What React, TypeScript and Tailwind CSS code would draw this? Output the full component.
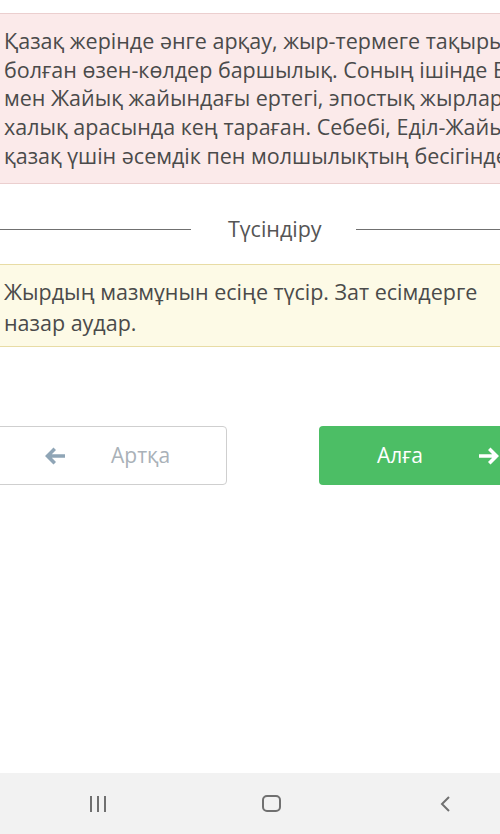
import React from "react";

const lines = [
  "Қазақ жерінде әнге арқау, жыр-термеге тақырып",
  "болған өзен-көлдер баршылық. Соның ішінде Еділ",
  "мен Жайық жайындағы ертегі, эпостық жырлар",
  "халық арасында кең тараған. Себебі, Еділ-Жайық",
  "қазақ үшін әсемдік пен молшылықтың бесігіндей",
];

const ArrowLeft = ({ className }: { className?: string }) => (
  <svg viewBox="0 0 24 20" className={className} fill="currentColor">
    <path d="M10.5 1.5 L2 10 L10.5 18.5 L13 16 L8.8 11.8 H22 V8.2 H8.8 L13 4 Z" />
  </svg>
);

const ArrowRight = ({ className }: { className?: string }) => (
  <svg viewBox="0 0 24 20" className={className} fill="currentColor">
    <path d="M13.5 1.5 L22 10 L13.5 18.5 L11 16 L15.2 11.8 H2 V8.2 H15.2 L11 4 Z" />
  </svg>
);

export default function App() {
  return (
    <div
      className="w-[500px] h-[834px] overflow-hidden bg-white flex flex-col text-[#4a4a4a]"
      style={{ fontFamily: '"Open Sans", "Noto Sans", sans-serif' }}
    >
      <div className="mt-[13px] -ml-[10px] w-[560px] h-[171px] shrink-0 bg-[#fbeaea] border border-[#ebcfcf] pl-[13px] pt-[13px] overflow-hidden">
        {lines.map((l, i) => (
          <div key={i} className="whitespace-nowrap text-[21.5px] leading-[28.7px]">
            {l}
          </div>
        ))}
      </div>

      <div className="flex items-center mt-[30px] h-[30px] shrink-0">
        <div className="w-[191px] shrink-0 h-px bg-[#707070]" />
        <span className="ml-[37px] text-[21.5px] leading-[30px] text-[#555]">Түсіндіру</span>
        <div className="ml-[34px] flex-1 h-px bg-[#707070]" />
      </div>

      <div className="mt-[20px] -ml-[10px] w-[540px] h-[83px] shrink-0 bg-[#fdfae6] border border-[#e8dca5] pl-[13px] pt-[11px]">
        <div className="text-[21.5px] leading-[31px] whitespace-nowrap">Жырдың мазмұнын есіңе түсір. Зат есімдерге</div>
        <div className="text-[21.5px] leading-[31px] whitespace-nowrap">назар аудар.</div>
      </div>

      <div className="flex mt-[79px] h-[59px] shrink-0">
        <div className="-ml-[10px] w-[237px] shrink-0 h-full border border-[#cfcfcf] rounded-[4px] flex items-center pl-[52px]">
          <ArrowLeft className="w-[24px] h-[20px] text-[#8fa5b6]" />
          <span className="ml-[44px] text-[21px] text-[#a9b1b8]">Артқа</span>
        </div>
        <div className="ml-[92px] w-[200px] shrink-0 h-full bg-[#4cbe65] rounded-[4px] flex items-center pl-[58px]">
          <span className="text-[21px] text-white">Алға</span>
          <ArrowRight className="ml-[54px] w-[24px] h-[20px] text-white" />
        </div>
      </div>

      <div className="flex-1" />

      <div className="h-[61px] bg-[#f2f2f2] flex items-center shrink-0">
        <div className="ml-[90px] flex gap-[5px]">
          <div className="w-[2px] h-[16px] bg-[#707070]" />
          <div className="w-[2px] h-[16px] bg-[#707070]" />
          <div className="w-[2px] h-[16px] bg-[#707070]" />
        </div>
        <div className="ml-[156px] w-[19px] h-[17px] border-2 border-[#707070] rounded-[5px]" />
        <svg viewBox="0 0 12 18" className="ml-[158px] w-[12px] h-[18px]" fill="none" stroke="#707070" strokeWidth="2">
          <path d="M10 2 L3 9 L10 16" />
        </svg>
      </div>
    </div>
  );
}
